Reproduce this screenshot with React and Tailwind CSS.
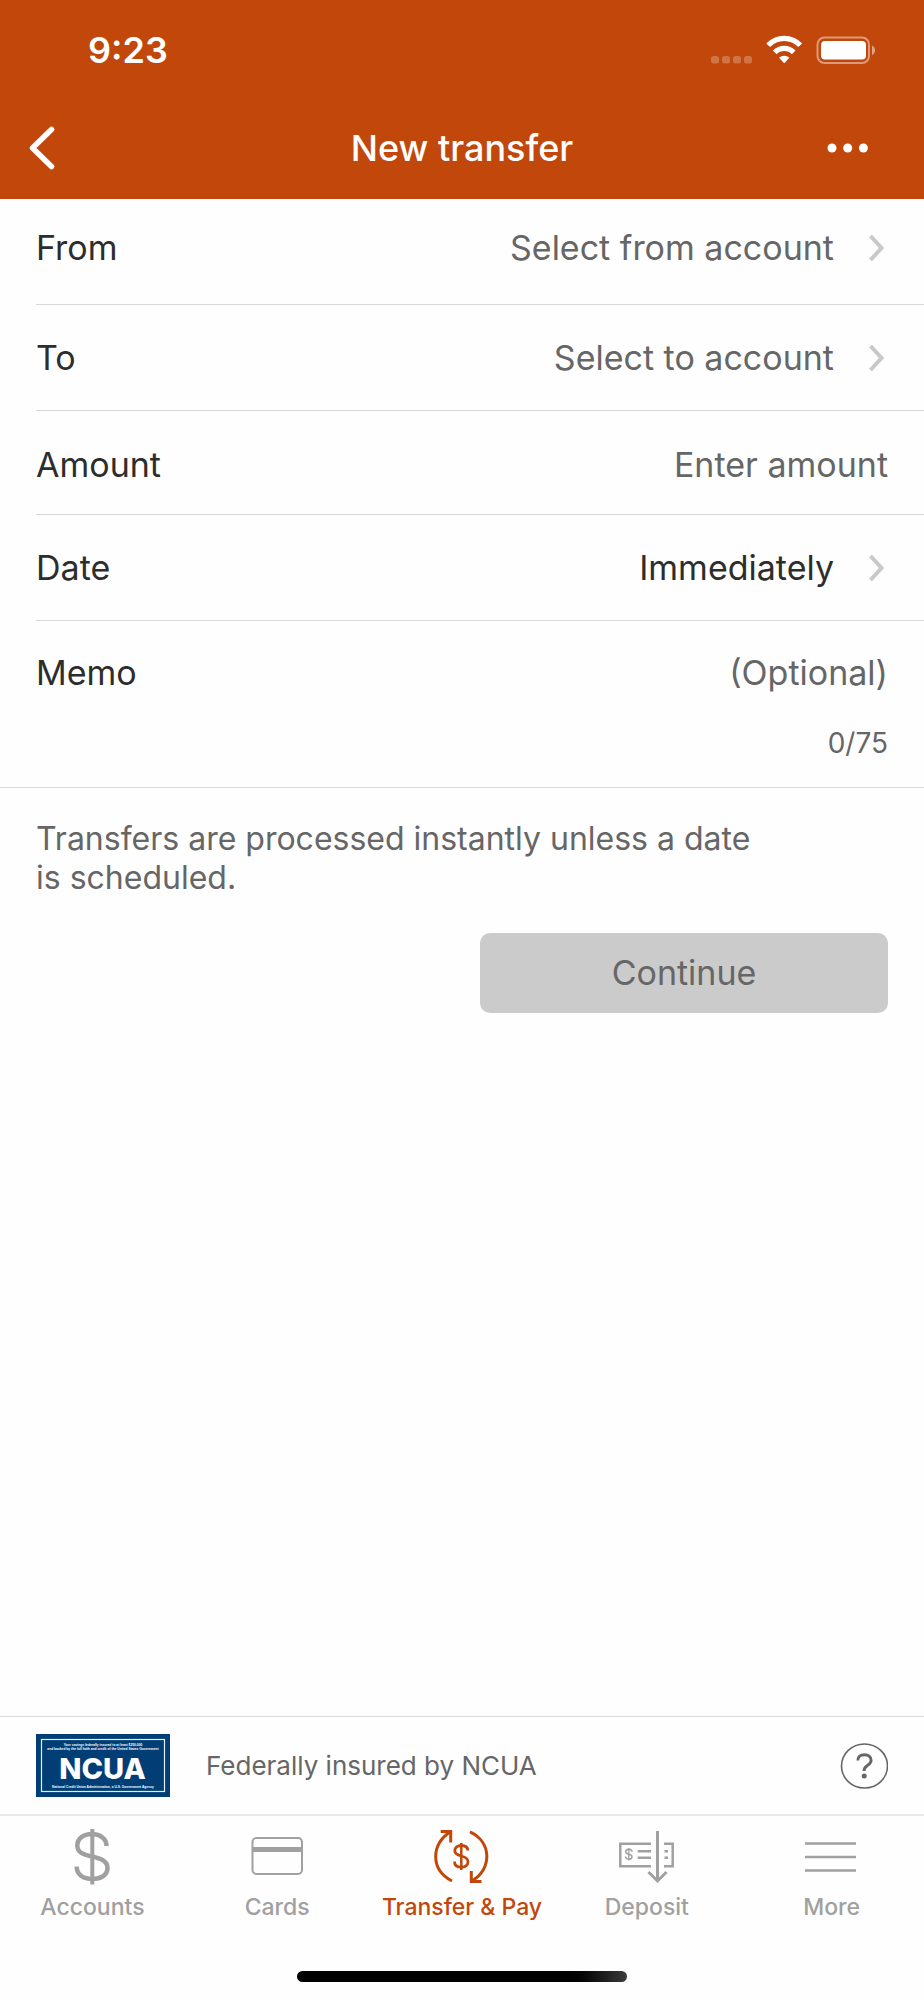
import { useState } from "react";

function BackIcon() {
  return (
    <svg width="28" height="44" viewBox="0 0 28 44" fill="none" stroke="currentColor" strokeWidth="5.5" strokeLinecap="round" strokeLinejoin="round" aria-hidden="true">
      <path d="M23.5 3.5 4.5 22l19 18.5" />
    </svg>
  );
}

function DotsIcon() {
  return (
    <svg width="42" height="10" viewBox="0 0 42 10" fill="currentColor" aria-hidden="true">
      <circle cx="5" cy="5" r="4.5" />
      <circle cx="20.700" cy="5" r="4.5" />
      <circle cx="36.400" cy="5" r="4.5" />
    </svg>
  );
}

function StatusIcons() {
  return (
    <svg width="166" height="30" viewBox="0 0 166 30" aria-hidden="true">
      <g fill="#fff" fillOpacity="0.24">
        <rect x="1" y="21" width="8" height="7.500" rx="2.500" />
        <rect x="12" y="21" width="8" height="7.500" rx="2.500" />
        <rect x="23" y="21" width="8" height="7.500" rx="2.500" />
        <rect x="34" y="21" width="8" height="7.500" rx="2.500" />
      </g>
      <g fill="none" stroke="#fff" strokeWidth="5.200">
        <path d="M58.200 10.300A22 22 0 0 1 90.200 10.300" />
        <path d="M64.700 17.300A13.400 13.400 0 0 1 83.700 17.300" />
      </g>
      <path d="M74.200 28.300 69 22.800a7.500 7.500 0 0 1 10.400 0Z" fill="#fff" />
      <rect x="107.500" y="2.500" width="51.500" height="25.500" rx="7" fill="none" stroke="#fff" strokeOpacity="0.45" strokeWidth="2" />
      <rect x="111" y="6" width="45" height="18.500" rx="4" fill="#fff" />
      <path d="M162 10.500c4 1.800 4 7.800 0 9.500Z" fill="#fff" fillOpacity="0.5" />
    </svg>
  );
}

function ChevronRight() {
  return (
    <svg className="shrink-0" width="18" height="28" viewBox="0 0 18 28" fill="none" stroke="#c8c8c8" strokeWidth="4" aria-hidden="true">
      <path d="M2.500 2 13.500 14 2.500 26" />
    </svg>
  );
}

function DollarIcon() {
  return (
    <svg width="56" height="56" viewBox="0 0 56 56" fill="none" stroke="currentColor" strokeWidth="4.500" aria-hidden="true">
      <path d="M28.300 0V55.500" strokeWidth="4" />
      <path d="M42.500 17C42.500 9.500 36 5 28 5C19.500 5 13.300 9.500 13.300 16.500C13.300 23.500 19 25.500 28 27.500C37 29.500 43.500 32 43.500 39C43.500 46 37 50 28.500 50C19 50 12.700 45.500 12.700 37.500" />
    </svg>
  );
}

function CardIcon() {
  return (
    <svg width="56" height="56" viewBox="0 0 56 56" fill="none" stroke="currentColor" aria-hidden="true">
      <rect x="3.500" y="9" width="49.500" height="36" rx="4" strokeWidth="2" />
      <path d="M4 20.500H53" strokeWidth="5" />
    </svg>
  );
}

function TransferIcon() {
  return (
    <svg width="56" height="56" viewBox="0 0 56 56" fill="none" stroke="currentColor" strokeWidth="3" aria-hidden="true">
      <path d="M6.700 2.500H16.700V13.500" />
      <path d="M16.700 2.500C-2.500 15-4.500 40 18 52" />
      <path d="M36 2.800C58 13 58 40 38.500 51.500" />
      <path d="M37.300 42V52.500H47.500" />
      <path d="M27.300 14V41" strokeWidth="2.500" />
      <path d="M33.700 21.500C33.700 18 31 16.500 27.300 16.500C23.500 16.500 20.800 18.500 20.800 21.800C20.800 25 23.500 26 27.300 27C31.500 28 34 29.500 34 32.800C34 36.200 31 38.200 27.300 38.200C23.200 38.200 20.500 36.500 20.500 32.500" strokeWidth="2.800" />
    </svg>
  );
}

function DepositIcon() {
  return (
    <svg width="56" height="56" viewBox="1 0 56 56" fill="none" stroke="currentColor" strokeWidth="2.500" aria-hidden="true">
      <path d="M33 14.700H2.300V37.300H33" />
      <path d="M46 14.700H54.700V37.300H46" />
      <path d="M39.500 2V52M30.500 43 39.500 52 48.500 43" strokeWidth="3" />
      <path d="M19.700 22.200H33M19.700 28.700H33M46.500 22.200H50M46.500 28.700H50" />
      <path d="M10.800 19V31.500" strokeWidth="1.300" />
      <path d="M14 22.800C14 21 12.500 20.300 10.800 20.300C9 20.300 7.700 21.200 7.700 22.700C7.700 24.300 9 24.800 10.800 25.200C12.700 25.600 14 26.200 14 27.700C14 29.300 12.600 30.200 10.800 30.200C9 30.200 7.500 29.500 7.500 27.600" strokeWidth="1.400" />
    </svg>
  );
}

function MenuIcon() {
  return (
    <svg width="56" height="56" viewBox="1 0 56 56" fill="none" stroke="currentColor" strokeWidth="2.700" aria-hidden="true">
      <path d="M2 14.500H53M2 28H53M2 41.500H53" />
    </svg>
  );
}

function HelpIcon() {
  return (
    <svg width="48" height="48" viewBox="0 0 48 48" fill="none" stroke="#666" aria-hidden="true">
      <ellipse cx="24.500" cy="24" rx="23" ry="22" strokeWidth="1.600" />
      <path d="M17.800 18.500C17.800 14.500 20.500 12.700 24.300 12.700C28.300 12.700 31.100 15 31.100 18.200C31.100 21.300 28.800 22.500 26.800 24C24.900 25.400 24 26.500 24 29" strokeWidth="2.900" />
      <circle cx="24.200" cy="34" r="2.500" fill="#666" stroke="none" />
    </svg>
  );
}

function NcuaLogo() {
  return (
    <svg className="shrink-0" width="134" height="63" viewBox="0 0 134 63" role="img" aria-label="NCUA" fill="#fff" textAnchor="middle" fontFamily="'Liberation Sans', Arial, sans-serif" fontWeight="700">
      <rect width="134" height="63" fill="#003e75" />
      <rect x="5.500" y="5.500" width="123" height="52" fill="none" stroke="#fff" strokeOpacity="0.9" strokeWidth="1.200" />
      <text x="67" y="11.700" fontSize="3.300">Your savings federally insured to at least $250,000</text>
      <text x="67" y="16.300" fontSize="3.300">and backed by the full faith and credit of the United States Government</text>
      <text x="66.500" y="44.500" fontSize="29" fontFamily="Inter, sans-serif" fontWeight="800">NCUA</text>
      <text x="67" y="53.700" fontSize="3.300">National Credit Union Administration, a U.S. Government Agency</text>
    </svg>
  );
}

function SelectRow({ id, label, value, chosen, first }) {
  return (
    <div className={`ml-9 flex h-[106px] items-center justify-between border-b border-[#d8d8d8] pr-[38px] ${first ? "pb-2" : ""}`}>
      <label htmlFor={id} className="text-[#2d2d2d]">{label}</label>
      <button
        id={id}
        type="button"
        className={`flex items-center gap-[34px] ${chosen ? "text-[#2d2d2d]" : "text-[#666]"}`}
      >
        {value}
        <ChevronRight />
      </button>
    </div>
  );
}

const tabs = [
  { label: "Accounts", Icon: DollarIcon },
  { label: "Cards", Icon: CardIcon },
  { label: "Transfer & Pay", Icon: TransferIcon, active: true },
  { label: "Deposit", Icon: DepositIcon },
  { label: "More", Icon: MenuIcon },
];

export default function App() {
  const [memo, setMemo] = useState("");

  return (
    <div className="flex min-h-screen flex-col bg-[#fefefe] font-['Inter',sans-serif] text-[34px] leading-10">
      <header className="bg-[#c2470b] text-white">
        <div className="flex h-[100px] items-center justify-between pr-12 pl-[88px]">
          <span className="text-[36px] font-semibold">9:23</span>
          <StatusIcons />
        </div>
        <div className="grid h-[99px] grid-cols-[1fr_auto_1fr] items-center px-7 pb-1">
          <button type="button" aria-label="Back" className="justify-self-start"><BackIcon /></button>
          <h1 className="text-[36px] font-medium">New transfer</h1>
          <button type="button" aria-label="More options" className="justify-self-end pr-[27px]"><DotsIcon /></button>
        </div>
      </header>

      <main className="flex-1">
        <form>
          <SelectRow id="from" label="From" value="Select from account" first />
          <SelectRow id="to" label="To" value="Select to account" />
          <div className="ml-9 flex h-[104px] items-center justify-between border-b border-[#d8d8d8] pt-1 pr-9">
            <label htmlFor="amount" className="text-[#2d2d2d]">Amount</label>
            <input id="amount" inputMode="decimal" placeholder="Enter amount" className="w-1/2 bg-transparent text-right outline-none placeholder:text-[#666]" />
          </div>
          <SelectRow id="date" label="Date" value="Immediately" chosen />
          <div className="border-b border-[#d8d8d8] px-9 pt-8 pb-6">
            <div className="flex items-center justify-between">
              <label htmlFor="memo" className="text-[#2d2d2d]">Memo</label>
              <input id="memo" maxLength={75} value={memo} onChange={(e) => setMemo(e.target.value)} placeholder="(Optional)" className="w-1/2 bg-transparent text-right outline-none placeholder:text-[#666]" />
            </div>
            <p className="pt-[30px] text-right text-[28px] text-[#666]">{memo.length}/75</p>
          </div>
          <div className="px-9 pt-[31px]">
            <p className="max-w-[740px] text-[32px] leading-[39px] text-[#666]">
              Transfers are processed instantly unless a date is scheduled.
            </p>
            <div className="flex justify-end pt-9">
              <button type="submit" disabled className="h-20 w-[408px] rounded-[10px] bg-[#cbcbcb] text-[#666]">Continue</button>
            </div>
          </div>
        </form>
      </main>

      <footer>
        <div className="flex h-[98px] items-center border-t border-[#dcdcdc] px-9">
          <NcuaLogo />
          <p className="flex-1 pl-9 text-[26px] text-[#666]">Federally insured by NCUA</p>
          <button type="button" aria-label="Help"><HelpIcon /></button>
        </div>
        <nav className="grid grid-cols-5 border-t-2 border-[#e9e9e9] pt-[13px] text-[23px] leading-8 font-medium">
          {tabs.map(({ label, Icon, active }) => (
            <a
              key={label}
              href="#"
              aria-current={active ? "page" : undefined}
              className={`flex flex-col items-center gap-1.5 whitespace-nowrap ${active ? "text-[#c2470b]" : "text-[#a0a0a0]"}`}
            >
              <Icon />
              {label}
            </a>
          ))}
        </nav>
        <div className="flex justify-center pt-12 pb-[18px]">
          <div className="h-[11px] w-[330px] rounded-full bg-linear-to-r from-black from-80% to-[#3c3c3c]" />
        </div>
      </footer>
    </div>
  );
}
